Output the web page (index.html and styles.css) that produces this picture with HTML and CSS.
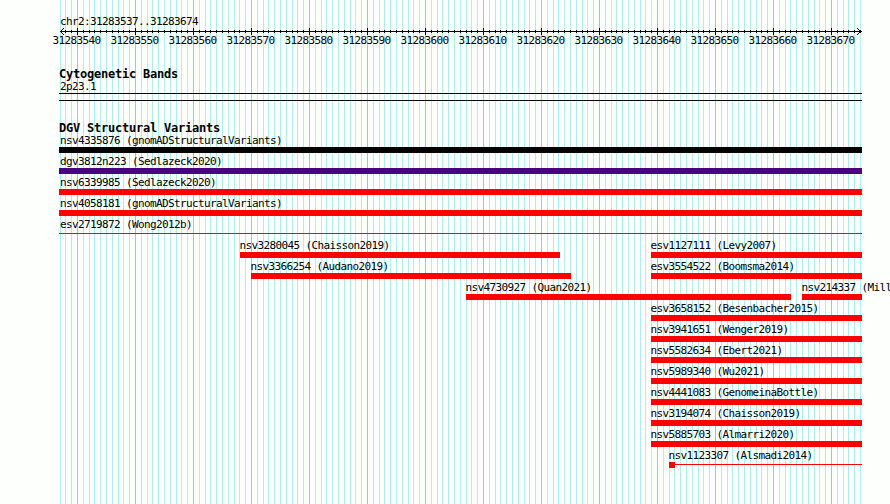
FILE: index.html
```html
<!DOCTYPE html>
<html lang="en">
<head>
  <meta charset="UTF-8">
  <title>chr2:31283537..31283674</title>
  <link rel="stylesheet" href="styles.css">
</head>
<body>

<div class="browser">
  <!-- Grid lines behind all tracks -->
  <svg class="grid" id="grid" width="890" height="504" shape-rendering="crispEdges"></svg>

  <div class="content">
    <div class="region">chr2:31283537..31283674</div>
    <svg class="ruler" id="ruler" width="803" height="9" shape-rendering="crispEdges"></svg>
    <div class="scale" id="scale"></div>

    <h2 class="cyto-title">Cytogenetic Bands</h2>
    <div class="band-label">2p23.1</div>
    <div class="band"></div>

    <h2 class="dgv-title">DGV Structural Variants</h2>
    <div class="tracks" id="tracks"></div>
  </div>
</div>

<script src="script.js"></script>
</body>
</html>
```
FILE: styles.css
```css
body {
  margin: 0;
  background-color: #fdfffc;
  overflow: hidden;
}

.browser {
  position: relative;
  width: 890px;
  height: 504px;
  overflow: hidden;
  color: #000;
  font-family: "DejaVu Sans Mono", monospace;
  font-size: 11px;
  letter-spacing: -0.622px;
  line-height: 13px;
}

.grid {
  position: absolute;
  top: 0;
  left: 0;
}

.content {
  position: relative;
  width: 803px;
  padding: 15px 0 0 59px;
  white-space: nowrap;
}

.region {
  height: 12px;
  padding-left: 1px;
}

.ruler {
  display: block;
}

.scale {
  display: flex;
  height: 32px;
  margin: -2px 0 0 -11.5px;
}

.scale span {
  flex: none;
  width: 58px;
  text-align: center;
}

h2 {
  margin: 0;
  font-size: 12px;
  letter-spacing: -0.224px;
  line-height: 13px;
}

.cyto-title {
  height: 13px;
  padding-top: 2px;
}

.band-label {
  height: 12px;
  padding-left: 1px;
  margin-top: -1px;
}

.band {
  height: 6px;
  margin-top: 1px;
  border-top: 1px solid #000;
  border-bottom: 1px solid #000;
}

.dgv-title {
  margin-top: 21px;
}

.tracks {
  display: grid;
  grid-template-columns: 803px;
  grid-auto-rows: 21px;
  margin-top: -1px;
}

.row {
  display: flex;
}

.variant {
  flex: none;
}

.name {
  height: 13px;
  padding-left: 1px;
}

.far .name {
  padding-left: 0;
  margin-left: -0.6px;
}

.bar {
  height: 6px;
  background-color: #f00;
}

.black .bar {
  background-color: #000;
}

.purple .bar {
  background-color: #4b0082;
}

.thin .bar {
  height: 1px;
  margin-top: 2px;
}

/* Small square at the start of a thin line */
.point .bar {
  display: flex;
  align-items: center;
  background: linear-gradient(#f00, #f00) 0 2px / 100% 1px no-repeat;
}

.point .bar::before {
  content: "";
  width: 6px;
  height: 6px;
  background-color: #f00;
}
```
FILE: script.js
```javascript
var LEFT = 59;
var WIDTH = 803;

function rect(x, y, w, h, color) {
  return '<rect x="' + x + '" y="' + y + '" width="' + w + '" height="' + h + '" fill="' + color + '"/>';
}

// One line per base, a darker one every ten bases
var grid = "";
var ticks = rect(1, 4, WIDTH - 1, 1, "#000");
for (var i = -3; i <= 135; i++) {
  var x = Math.round(77 + i * 5.8);
  if (x > 861) break;
  var major = i % 10 === 0;
  grid += rect(x, 0, 1, 504, major ? "#87ceeb" : "#afeeee");
  if (i > -3) {
    ticks += major ? rect(x - LEFT, 1, 1, 7, "#000") : rect(x - LEFT, 3, 1, 3, "#000");
  }
}
// Arrow heads, one pixel per step
for (var s = 1; s <= 3; s++) {
  ticks += rect(1 + s, 4 - s, 1, 1, "#000") + rect(1 + s, 4 + s, 1, 1, "#000");
  ticks += rect(801 - s, 4 - s, 1, 1, "#000") + rect(801 - s, 4 + s, 1, 1, "#000");
}
document.getElementById("grid").innerHTML = grid;
document.getElementById("ruler").innerHTML = ticks;

// Scale numbers
var scale = "";
for (var n = 31283540; n <= 31283670; n += 10) {
  scale += "<span>" + n + "</span>";
}
document.getElementById("scale").innerHTML = scale;

// Each row holds [name, start, width, style]
var rows = [
  [["nsv4335876 (gnomADStructuralVariants)", 0, 803, "black"]],
  [["dgv3812n223 (Sedlazeck2020)", 0, 803, "purple"]],
  [["nsv6339985 (Sedlazeck2020)", 0, 803, ""]],
  [["nsv4058181 (gnomADStructuralVariants)", 0, 803, ""]],
  [["esv2719872 (Wong2012b)", 0, 803, "thin"]],
  [["nsv3280045 (Chaisson2019)", 181, 320, "far"], ["esv1127111 (Levy2007)", 592, 211, "far"]],
  [["nsv3366254 (Audano2019)", 192, 320, "far"], ["esv3554522 (Boomsma2014)", 592, 211, "far"]],
  [["nsv4730927 (Quan2021)", 407, 325, "far"], ["nsv214337 (Mill", 743, 60, "far"]],
  [["esv3658152 (Besenbacher2015)", 592, 211, "far"]],
  [["nsv3941651 (Wenger2019)", 592, 211, "far"]],
  [["nsv5582634 (Ebert2021)", 592, 211, "far"]],
  [["nsv5989340 (Wu2021)", 592, 211, "far"]],
  [["nsv4441083 (GenomeinaBottle)", 592, 211, "far"]],
  [["nsv3194074 (Chaisson2019)", 592, 211, "far"]],
  [["nsv5885703 (Almarri2020)", 592, 211, "far"]],
  [["nsv1123307 (Alsmadi2014)", 610, 193, "far point"]]
];

var html = "";
rows.forEach(function (row) {
  var end = 0;
  html += '<div class="row">';
  row.forEach(function (v) {
    html += '<div class="variant ' + v[3] + '" style="width:' + v[2] + "px;margin-left:" + (v[1] - end) + 'px">' +
      '<div class="name">' + v[0] + '</div><div class="bar"></div></div>';
    end = v[1] + v[2];
  });
  html += "</div>";
});
document.getElementById("tracks").innerHTML = html;
```
